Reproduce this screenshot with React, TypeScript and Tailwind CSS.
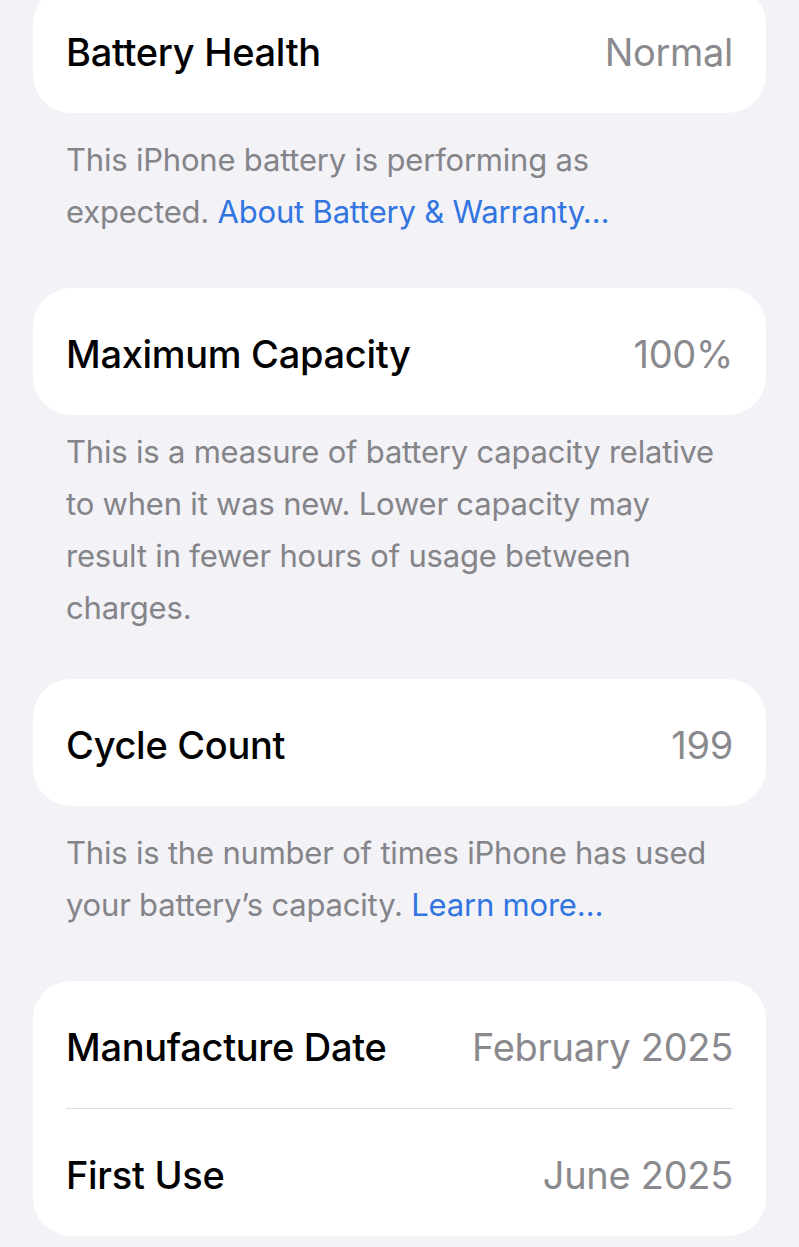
import type { ReactNode } from 'react';

const FONT = { fontFamily: 'Inter, "Noto Sans", "Liberation Sans", sans-serif' };

function Row({ label, value, className = '' }: { label: string; value: string; className?: string }) {
  return (
    <div className={`flex items-center justify-between px-[33px] pt-[5px] h-[127px] ${className}`}>
      <span className="text-[38px] font-medium text-black tracking-[-0.3px]">{label}</span>
      <span className="text-[38px] font-normal text-[#8a8a8e] tracking-[-0.3px]">{value}</span>
    </div>
  );
}

function Card({ children, className = '' }: { children: ReactNode; className?: string }) {
  return <div className={`bg-white rounded-[38px] overflow-hidden ${className}`}>{children}</div>;
}

function Footer({ children, className = '' }: { children: ReactNode; className?: string }) {
  return (
    <p className={`px-[33px] text-[31px] leading-[52px] text-[#848489] tracking-[-0.2px] ${className}`}>
      {children}
    </p>
  );
}

function Link({ children }: { children: ReactNode }) {
  return <span className="text-[#3275e0]">{children}</span>;
}

export default function App() {
  return (
    <div className="h-[1247px] overflow-hidden bg-[#f2f2f7] px-[33px]" style={FONT}>
      <Card className="-mt-[14px]">
        <Row label="Battery Health" value="Normal" />
      </Card>
      <Footer className="pt-[21px] pb-[50px]">
        This iPhone battery is performing as expected. <Link>About Battery &amp; Warranty…</Link>
      </Footer>

      <Card>
        <Row label="Maximum Capacity" value="100%" />
      </Card>
      <Footer className="pt-[11px] pb-[45px]">
        This is a measure of battery capacity relative to when it was new. Lower capacity may result in fewer
        hours of usage between charges.
      </Footer>

      <Card>
        <Row label="Cycle Count" value="199" />
      </Card>
      <Footer className="pt-[21px] pb-[50px]">
        This is the number of times iPhone has used your battery’s capacity. <Link>Learn more…</Link>
      </Footer>

      <Card>
        <Row label="Manufacture Date" value="February 2025" />
        <div className="mx-[33px] h-px bg-[#dedee2]" />
        <Row label="First Use" value="June 2025" />
      </Card>
    </div>
  );
}
